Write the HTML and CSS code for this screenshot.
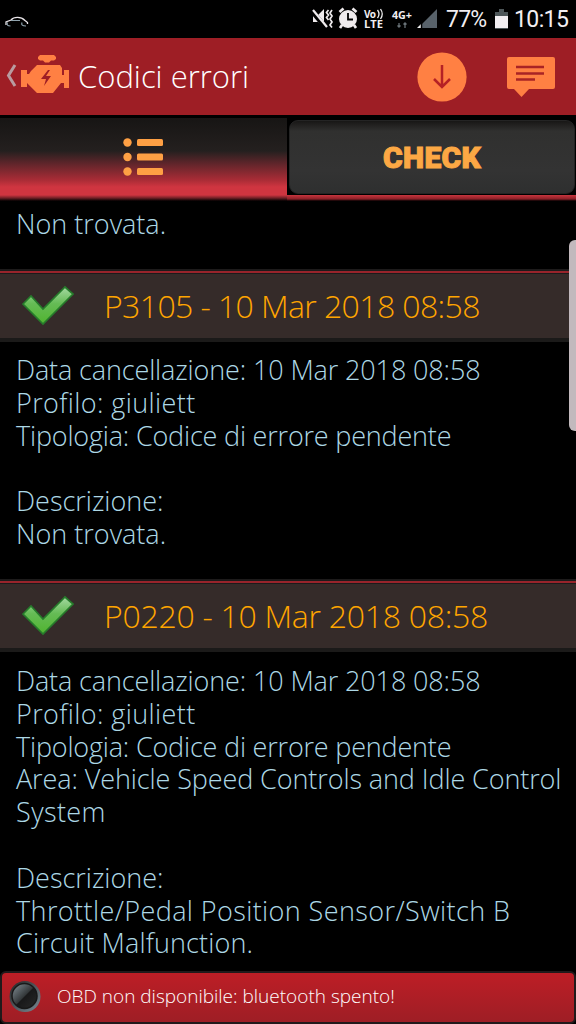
FILE: index.html
```html
<!DOCTYPE html>
<html lang="it">
<head>
<meta charset="utf-8">
<title>Codici errori</title>
<link rel="stylesheet" href="styles.css">
</head>
<body>
<div class="screen">
  <div class="status">
    <svg class="car" width="24" height="12" viewBox="0 0 24 12"><path d="M1 9V6L6 4C9 .5 16 .5 20 4.500L22.500 6.500V8" fill="none" stroke="#e8e4e8" stroke-width="1.300"/><path d="M6 4.500H15M2.500 6.500Q1 10 5.500 10M17 6.500Q15.500 10 21 10" fill="none" stroke="#8fa3ad" stroke-width="1.200"/></svg>
    <svg class="sys" width="126" height="24" viewBox="0 0 126 24">
      <g fill="#efebed"><path d="M1 8H6L12 2V20L6 15H1Z"/><path d="M0 4L14 21" stroke="#000" stroke-width="5"/><path d="M1 3L15 20" stroke="#efebed" stroke-width="2.200"/><path d="M16.500 3L14.500 5.500L16.500 8L14.500 10.500L16.500 13M20 3L18 6L20 9L18 12L20 15L18 18L20 20.500" fill="none" stroke="#efebed" stroke-width="1.700"/>
      <circle cx="36" cy="12" r="9"/><path d="M27.500 5L31.500 1.500M44.500 5L40.500 1.500M30 18L28 21M42 18L44 21" stroke="#efebed" stroke-width="2.700"/><path d="M36 6V12.500H41" stroke="#000" stroke-width="1.800" fill="none"/></g>
      <text class="tiny" x="52" y="11" textLength="12">Vo</text><path d="M65.500 3q3 4 0 8M68.500 2q3.500 5 0 10" fill="none" stroke="#eee" stroke-width="1.300"/><text class="tiny" x="52" y="21" textLength="19" lengthAdjust="spacingAndGlyphs">LTE</text>
      <text class="tiny" x="80" y="12" textLength="20" lengthAdjust="spacingAndGlyphs">4G+</text><path d="M87 16V20M85.500 18.500L87 20L88.500 18.500M93 21V16M91.500 17.500L93 16L94.500 17.500" fill="none" stroke="#687176" stroke-width="1.300"/>
      <path d="M106 21L125 2V21Z" fill="#58626a"/><path d="M105 21L109 17V21Z" fill="#eee"/><path d="M109.500 15V22" stroke="#000" stroke-width="1.500"/>
    </svg>
    <span class="pct">77%</span>
    <svg class="bat" width="13" height="20" viewBox="0 0 13 20"><path d="M4 0H9V3H13V20H0V3H4Z" fill="#4d5658"/><path d="M0 7H13V19H0Z" fill="#f2eef1"/></svg>
    <span class="clock">10:15</span>
  </div>
  <header class="bar">
    <svg width="70" height="44" viewBox="0 0 70 44"><path d="M15 10L8.500 20.500L15 31" fill="none" stroke="#b99ba0" stroke-width="3"/><g fill="#ff8043"><path d="M40 0H54L56 2V4L54 5.500H51L49 7.500H45L43 5.500H40L38 4V2ZM31 16L37 10H60L62 13V20H64V15H69V33H64V28H61L53 38H37L27 28V32H21V15H27V19H29Z"/></g><path d="M48 15L41 24H46L44 31L51 21H46L50 15Z" fill="#9e1e25"/></svg>
    <h1 class="title">Codici errori</h1>
    <svg class="dl" width="50" height="50" viewBox="0 0 50 50"><circle cx="25" cy="25" r="24.600" fill="#ff8043"/><path d="M25 13V35M17 27L25 35L33 27" fill="none" stroke="#b52125" stroke-width="2.500"/></svg>
    <svg class="msg" width="48" height="42" viewBox="0 0 48 42"><path d="M2 1H46Q48 1 48 3V31Q48 33 46 33H22L14.500 41L7 33H2Q0 33 0 31V3Q0 1 2 1Z" fill="#ff8043"/><path d="M9 11H37M9 17.500H37M9 23.500H28" stroke="#a92325" stroke-width="2.500"/></svg>
  </header>
  <nav class="tabs">
    <div class="tab on"><svg width="41" height="38" viewBox="0 0 41 38"><g fill="#ffa044"><circle cx="4.500" cy="4.500" r="4.200"/><circle cx="4.500" cy="19" r="4.200"/><circle cx="4.500" cy="33.500" r="4.200"/><rect x="14" y="1" width="26" height="7" rx="1.500"/><rect x="14" y="15.500" width="26" height="7" rx="1.500"/><rect x="14" y="30" width="26" height="7" rx="1.500"/></g></svg></div>
    <div class="tab off"><span class="check">CHECK</span></div>
  </nav>
  <main class="list">
    <div class="body first"><p>Non trovata.</p></div>
    <section class="entry">
      <div class="head"><svg class="tick" width="54" height="42" viewBox="0 0 54 42"><defs><linearGradient id="g" x1="0" y1="0" x2="0" y2="1"><stop offset="0" stop-color="#a5d9a3"/><stop offset=".45" stop-color="#65bb55"/><stop offset="1" stop-color="#50b42f"/></linearGradient></defs><path d="M1 19L9 11L21 24L43 2L51 9L21 39Z" fill="url(#g)" stroke="#267b2b" stroke-width="1.700"/></svg><h2 class="code-a">P3105 - 10 Mar 2018 08:58</h2></div>
      <div class="body">
        <p class="date">Data cancellazione: 10 Mar 2018 08:58</p>
        <p class="wide">Profilo: giuliett</p>
        <p class="type">Tipologia: Codice di errore pendente</p>
        <p></p>
        <p>Descrizione:</p>
        <p>Non trovata.</p>
      </div>
    </section>
    <section class="entry">
      <div class="head"><svg class="tick" width="54" height="42" viewBox="0 0 54 42"><path d="M1 19L9 11L21 24L43 2L51 9L21 39Z" fill="url(#g)" stroke="#267b2b" stroke-width="1.700"/></svg><h2 class="code-b">P0220 - 10 Mar 2018 08:58</h2></div>
      <div class="body last">
        <p class="date">Data cancellazione: 10 Mar 2018 08:58</p>
        <p class="wide">Profilo: giuliett</p>
        <p class="type">Tipologia: Codice di errore pendente</p>
        <p class="area">Area: Vehicle Speed Controls and Idle Control</p>
        <p class="wide">System</p>
        <p></p>
        <p>Descrizione:</p>
        <p class="wide">Throttle/Pedal Position Sensor/Switch B</p>
        <p class="circuit">Circuit Malfunction.</p>
      </div>
    </section>
  </main>
  <footer class="foot">
    <svg width="32" height="33" viewBox="0 0 32 33"><defs><linearGradient id="b" x1="0" y1="0" x2="1" y2="1"><stop offset="0" stop-color="#222"/><stop offset="1" stop-color="#7b8b96"/></linearGradient><linearGradient id="c" x1="0" y1="0" x2="1" y2="1"><stop offset="0" stop-color="#87949b"/><stop offset=".5" stop-color="#323638"/><stop offset=".52" stop-color="#181819"/><stop offset="1" stop-color="#292929"/></linearGradient></defs><circle cx="16" cy="16.500" r="15.500" fill="url(#b)"/><circle cx="15.500" cy="16" r="12.500" fill="url(#c)" stroke="#181818" stroke-width="1.500"/></svg>
    <span>OBD non disponibile: bluetooth spento!</span>
  </footer>
  <div class="handle"></div>
</div>
</body>
</html>
```
FILE: styles.css
```css
* { box-sizing: border-box; }
body { margin: 0; background: #000; font-family: "Open Sans", "Noto Sans", sans-serif; font-weight: 300; }
.screen { position: relative; width: 576px; height: 1024px; overflow: hidden; display: flex; flex-direction: column; background: #000; }
h1, h2, p { margin: 0; font-weight: 300; white-space: nowrap; }
.status { height: 38px; display: flex; align-items: center; color: #f2eef1; font: 400 23px/38px Roboto, sans-serif; }
.status svg, .bar svg { flex: none; }
.car { margin: 6px 0 0 5px; }
.sys { margin-left: 283px; }
.tiny { font: 700 10px "Open Sans", sans-serif; fill: #f2eef1; }
.pct { width: 41px; margin: 2px 0 0 8px; letter-spacing: -0.8px; }
.bat { margin-left: 8px; }
.clock { margin: 2px 0 0 6px; letter-spacing: -0.6px; }
.bar { height: 77px; background: #9e1e25; display: flex; align-items: center; color: #fff; }
.title { font-size: 31px; margin-left: 8px; line-height: 77px; flex: none; width: 171px; }
.dl { margin-left: 168px; }
.msg { margin-left: 40px; }
.tabs { height: 86px; display: flex; border-top: 3px solid #000; background: linear-gradient(#000 0 77px, #c8353e 77px, #8c2028 81px, #000 83px); }
.tab { display: flex; align-items: center; justify-content: center; }
.on { width: 287px; background: linear-gradient(#171514, #24201f 33px, #5d252a 45px, #a92c36 62px, #cf3540 69px, #cf3540 77px, #702026 80px, #000 83px); padding-bottom: 6px; }
.off { width: 286px; height: 74px; margin: 2px 0 0 2px; border: 1px solid #242424; border-radius: 9px; background: linear-gradient(#181716, #30302f 10px, #333 50px, #2e2f2f); }
.check { font: 900 30px Roboto, sans-serif; letter-spacing: 0.3px; color: #fca844; -webkit-text-stroke: 1px #fca844; }
.list { height: 769px; color: #add8e6; font-size: 27px; line-height: 32.8px; }
.body { padding: 12px 16px 0; height: 237px; }
.body p { height: 32.8px; }
.first { height: 68px; padding-top: 7px; }
.last { padding-top: 13px; }
.date { letter-spacing: -0.13px; }
.wide { letter-spacing: 0.4px; }
.type { letter-spacing: -0.19px; }
.area { letter-spacing: -0.1px; }
.circuit { letter-spacing: 0.15px; }
.head { height: 73px; display: flex; align-items: center; padding-left: 22px; background: linear-gradient(#1d1b1b 0 2px, #98242b 2px 4px, #1d1b1b 4px 5px, #352b29 5px 69px, #1b1a19 69px); color: #ffa500; }
.head h2 { font-size: 32px; line-height: 64px; margin-left: 28px; }
.head .code-a { letter-spacing: -0.6px; }
.head .code-b { letter-spacing: -0.28px; }
.foot { height: 53px; margin-top: auto; display: flex; align-items: center; padding: 0 0 3px 7px; background: linear-gradient(#bd1e26, #9e1e25); border: 2px solid #211a1b; border-radius: 6px; color: #fff; font-size: 19px; }
.foot span { margin-left: 16px; }
.handle { position: absolute; right: -8px; top: 240px; width: 15px; height: 191px; border-radius: 6px; background: #c2b9bd; }
```
